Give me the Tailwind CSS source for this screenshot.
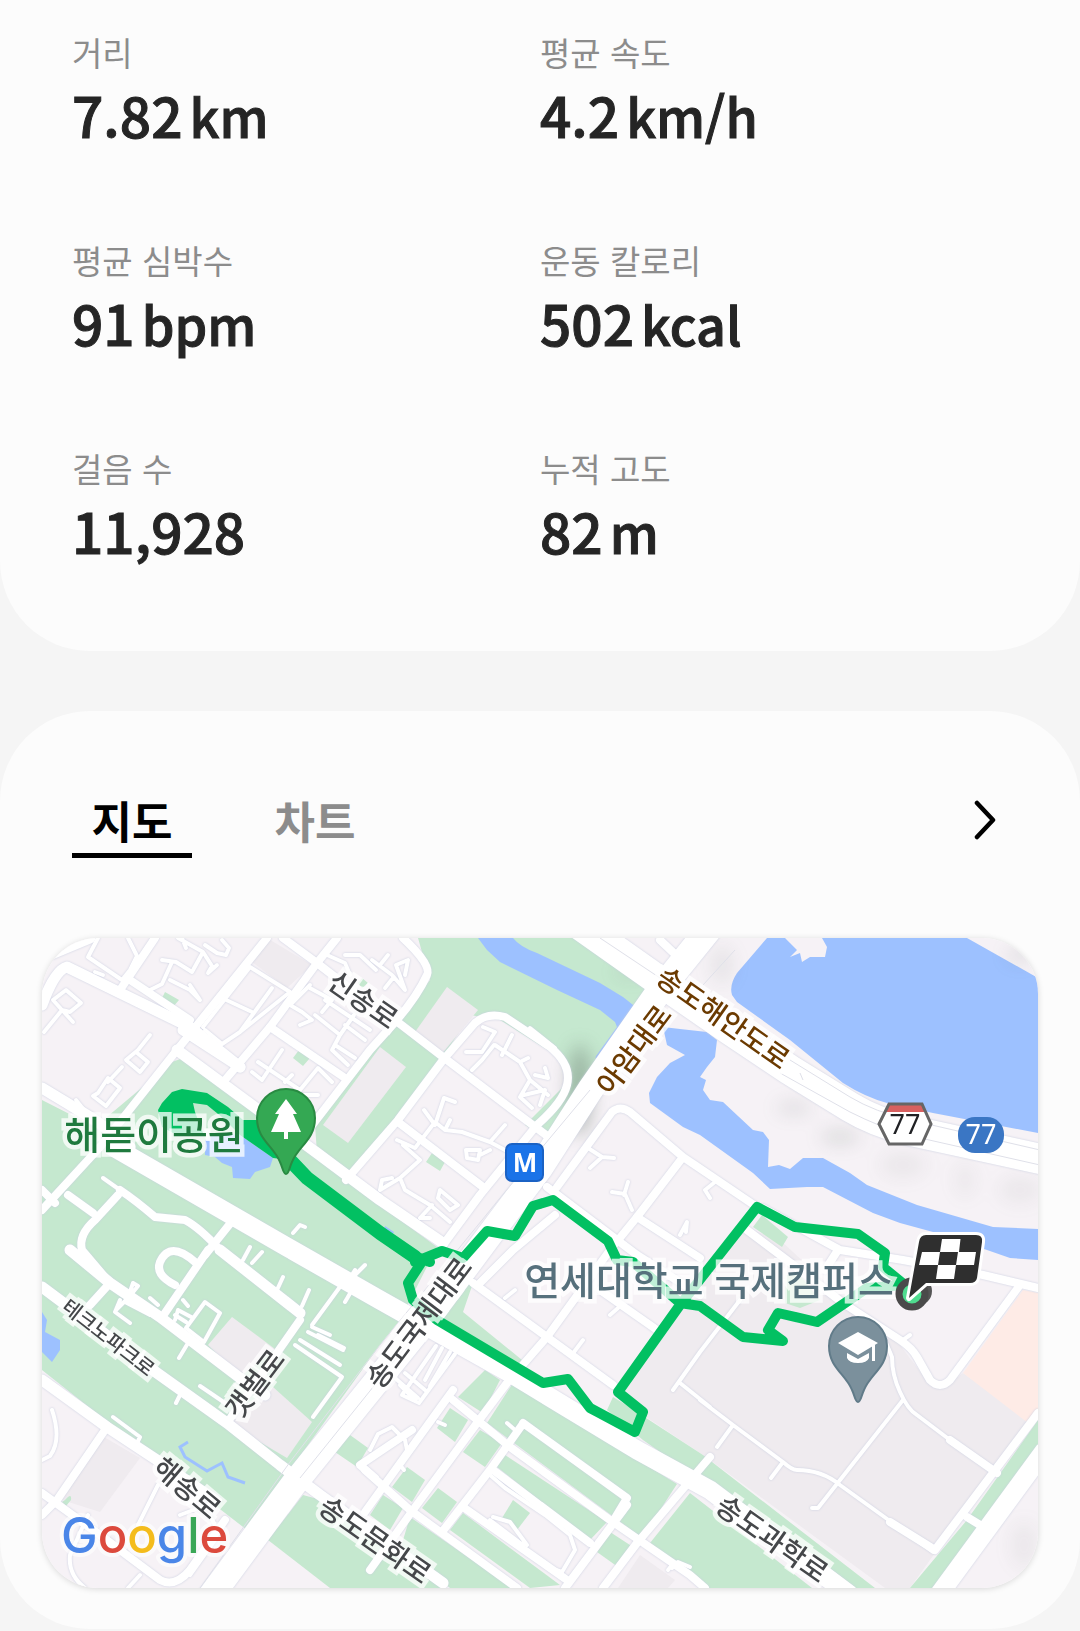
<!DOCTYPE html>
<html lang="ko">
<head>
<meta charset="utf-8">
<meta name="viewport" content="width=device-width, initial-scale=1">
<title>운동 결과</title>
<script src="https://cdn.jsdelivr.net/npm/@tailwindcss/browser@4"></script>
</head>
<body class="bg-[#f5f5f5] pb-0.5 font-['Noto_Sans_CJK_KR',sans-serif] text-[#252525]">
<main class="flex flex-col gap-[60px]">
  <section class="rounded-b-[90px] bg-[#fcfcfc] px-[72px] pt-[30px] pb-[81px]">
    <dl class="grid grid-cols-2 gap-y-[84px]">
      <div><dt class="text-[33px] leading-[44px] text-[#8c8c8c]">거리</dt><dd class="flex h-20 items-baseline gap-[7px] text-[55px] leading-[80px] font-medium [-webkit-text-stroke:1px_#252525]">7.82<span class="text-[52px]">km</span></dd></div>
      <div><dt class="text-[33px] leading-[44px] text-[#8c8c8c]">평균 속도</dt><dd class="flex h-20 items-baseline gap-[7px] text-[55px] leading-[80px] font-medium [-webkit-text-stroke:1px_#252525]">4.2<span class="text-[52px]">km/h</span></dd></div>
      <div><dt class="text-[33px] leading-[44px] text-[#8c8c8c]">평균 심박수</dt><dd class="flex h-20 items-baseline gap-[7px] text-[55px] leading-[80px] font-medium [-webkit-text-stroke:1px_#252525]">91<span class="text-[52px]">bpm</span></dd></div>
      <div><dt class="text-[33px] leading-[44px] text-[#8c8c8c]">운동 칼로리</dt><dd class="flex h-20 items-baseline gap-[7px] text-[55px] leading-[80px] font-medium [-webkit-text-stroke:1px_#252525]">502<span class="text-[52px]">kcal</span></dd></div>
      <div><dt class="text-[33px] leading-[44px] text-[#8c8c8c]">걸음 수</dt><dd class="h-20 text-[55px] leading-[80px] font-medium [-webkit-text-stroke:1px_#252525]">11,928</dd></div>
      <div><dt class="text-[33px] leading-[44px] text-[#8c8c8c]">누적 고도</dt><dd class="flex h-20 items-baseline gap-[7px] text-[55px] leading-[80px] font-medium [-webkit-text-stroke:1px_#252525]">82<span class="text-[52px]">m</span></dd></div>
    </dl>
  </section>

  <section class="rounded-[90px] bg-[#fcfcfc] px-[42px] pt-[79px] pb-[41px]">
    <div class="mb-20 flex items-start justify-between px-[30px]">
      <div class="flex gap-[63px]" role="tablist">
        <button role="tab" aria-selected="true" class="w-[120px] border-b-[5px] border-black pb-[3px] text-[44px] leading-[60px] font-bold text-black">지도</button>
        <button role="tab" aria-selected="false" class="w-[120px] border-b-[5px] border-transparent pb-[3px] text-[44px] leading-[60px] font-bold text-[#8c8c8c]">차트</button>
      </div>
      <button aria-label="자세히" class="flex h-[60px] items-center px-[11px]">
        <svg class="h-10 w-6" viewBox="0 0 24 40" fill="none" stroke="#000" stroke-width="4.500" stroke-linecap="round" stroke-linejoin="round"><path d="M4 3 L20 20 L4 37"/></svg>
      </button>
    </div>

    <div class="overflow-hidden rounded-[56px] shadow-[0_1px_6px_#00000026]">
    <svg class="block w-full" viewBox="42 938 996 650" role="img" aria-label="운동 경로 지도" font-family="'Noto Sans CJK KR', sans-serif">
      <defs>
        <filter id="haze" x="-50%" y="-50%" width="200%" height="200%"><feGaussianBlur stdDeviation="9"/></filter>
      </defs>
      <rect x="42" y="938" width="996" height="650" fill="#f6f2f6"/>

      <!-- built-up blocks -->
      <g fill="#efebef">
        <path d="M267 938 L312 965 L287 988 L252 962Z"/>
        <path d="M680 1310 L613 1395 L703 1455 L885 1588 L910 1588 L1030 1420 L963 1373 L947 1385 L928 1382 L900 1345 L845 1300 L780 1240 L747 1228Z"/>
        <path d="M104 1437 L140 1458 L100 1512 L62 1500Z"/>
        <path d="M640 1555 L675 1580 L668 1588 L618 1588Z"/>
      </g>
      <path d="M1023 1290 L1038 1293 L1038 1410 L1028 1423 L963 1373Z" fill="#feebe6"/>

      <!-- parks and green belts -->
      <g fill="#c5e8cf">
        <path d="M42 1100 L95 1127 L145 1085 L172 1062 L183 1058 L250 1107 L317 1155 L380 1205 L437 1247 L400 1320 L380 1345 L290 1470 L247 1530 L150 1455 L105 1420 L42 1370Z"/>
        <path d="M418 938 L587 938 L656 985 L653 1005 L600 1070 L552 1143 L525 1125 L570 1080 L560 1058 L500 1020 L470 1015 L443 1057 L350 1177 L317 1153 L315 1125 L430 980Z"/>
        <path d="M303 1495 L268 1540 L330 1588 L445 1588 L400 1550 L340 1505Z"/>
        <path d="M350 1435 L368 1448 L357 1467 L335 1452Z"/>
        <path d="M513 1383 L677 1484 L642 1538 L487 1423Z"/>
        <path d="M502 1453 L607 1522 L590 1540 L497 1467Z"/>
        <path d="M485 1370 L500 1380 L483 1413 L458 1397Z"/>
        <path d="M450 1408 L468 1420 L455 1442 L437 1428Z"/>
        <path d="M480 1430 L502 1443 L485 1467 L463 1452Z"/>
        <path d="M407 1467 L425 1480 L412 1502 L392 1487Z"/>
        <path d="M438 1488 L457 1502 L442 1523 L422 1508Z"/>
        <path d="M383 1495 L403 1508 L390 1530 L370 1515Z"/>
        <path d="M410 1517 L513 1588 L450 1588 L400 1550Z"/>
        <path d="M463 1513 L560 1585 L530 1588 L450 1530Z"/>
        <path d="M513 1500 L530 1513 L517 1530 L502 1518Z"/>
        <path d="M610 1532 L633 1547 L618 1567 L597 1552Z"/>
        <path d="M690 1493 L812 1588 L705 1588 L650 1543Z"/>
        <path d="M613 1397 L623 1403 L703 1455 L875 1588 L847 1588 L700 1480 L643 1440 L607 1410Z"/>
        <path d="M473 1283 L463 1312 L522 1360 L515 1372 L437 1322 L453 1290Z"/>
        <path d="M1038 1420 L1038 1453 L933 1588 L910 1588 L967 1520Z"/>
        <path d="M762 1215 L788 1237 L782 1247 L753 1227Z"/>
        <path d="M785 1275 L800 1275 L820 1300 L800 1308 L785 1303Z"/>
        <path d="M165 992 L179 1000 L173 1007 L161 1000Z M299 1050 L310 1058 L303 1066 L293 1058Z M432 1153 L445 1162 L440 1171 L426 1162Z M362 978 L368 983 L362 988 L358 983Z M65 1500 Q72 1492 71 1500 L66 1506 L62 1502Z"/>
      </g>
      <g fill="#efebef">
        <path d="M380 1047 L406 1067 L348 1143 L323 1125Z"/>
        <path d="M447 987 L478 1010 L441 1055 L415 1032Z"/>
        <path d="M232 1317 L275 1349 L240 1377 L208 1345Z"/>
        <path d="M273 1387 L312 1422 L287 1458 L228 1423 L245 1405Z"/>
      </g>

      <!-- water -->
      <g fill="#9dc1ff">
        <path d="M767 938 L737 973 Q729 985 732 995 L737 1002 L790 1040 L843 1083 Q865 1097 887 1103 L933 1113 L1038 1133 V978 L967 938 H822 L827 947 L825 957 L810 957 L802 962 L800 953 L790 957 L797 950 L785 938Z"/>
        <path d="M478 938 L513 938 Q520 947 537 953 L600 983 L623 997 L642 1012 L627 1030 L620 1032 L600 1058 Q594 1060 596 1056 L617 1027 L615 1022 L600 1010 L557 990 L500 962 L487 950Z"/>
        <path d="M663 1027 L680 1029 L707 1032 L717 1040 L715 1057 L707 1067 L700 1077 L706 1080 L703 1090 L710 1100 L723 1102 L753 1130 L763 1132 L769 1140 L768 1167 L779 1165 L790 1169 L803 1158 L823 1158 L850 1173 L867 1185 L917 1205 L993 1227 L1038 1229 V1260 L1010 1258 L987 1250 L933 1232 L900 1223 L873 1213 L823 1187 L807 1187 L770 1189 L753 1173 L700 1135 L683 1127 L650 1103 L649 1093 L657 1077 L670 1063 L685 1055 L667 1045Z"/>
        <path d="M205 1140 L205 1155 L215 1157 L222 1163 L232 1167 L233 1178 L250 1179 L255 1172 L270 1167 L273 1158 L240 1135 L215 1133Z"/>
        <path d="M42 1312 L47 1320 L45 1332 L60 1340 L60 1350 L52 1362 L42 1352Z"/>
        <path d="M385 1226 L394 1232 L392 1236 L384 1231Z"/>
      </g>
      <path d="M188 1442 L180 1447 L185 1457 L207 1471 L222 1463 L228 1477 L245 1483" fill="none" stroke="#9dc1ff" stroke-width="3"/>

      <!-- terrain shading -->
      <g filter="url(#haze)" fill="#6b7a70" opacity=".5">
        <ellipse cx="580" cy="1090" rx="11" ry="46"/>
        <ellipse cx="840" cy="1137" rx="20" ry="7" opacity=".4"/>
        <ellipse cx="794" cy="1108" rx="18" ry="7" opacity=".3"/>
        <ellipse cx="903" cy="1165" rx="24" ry="14" opacity=".15"/>
        <ellipse cx="965" cy="1180" rx="10" ry="18" opacity=".15"/>
        <ellipse cx="1020" cy="1190" rx="22" ry="14" opacity=".15"/>
        <ellipse cx="722" cy="965" rx="12" ry="20" opacity=".2"/>
        <ellipse cx="630" cy="972" rx="16" ry="6" opacity=".3"/>
        <ellipse cx="1020" cy="955" rx="14" ry="8" opacity=".3"/>
        <ellipse cx="1024" cy="1545" rx="14" ry="24" opacity=".15"/>
      </g>

      <g fill="none" stroke="#fff" stroke-linecap="round" stroke-linejoin="round" class="drop-shadow-[0_0_1px_#c9cee0]">
        <!-- lanes and drives -->
        <g stroke-width="4">
          <path d="M98 938 L88 957 L122 980 L130 970 L137 956 L128 938 M95 972 L103 975"/>
          <path d="M162 960 L176 962 L192 972 L203 952 L178 938 M182 938 L186 948 M205 945 L217 953 L226 955 L229 948 L222 940 M203 952 L212 966 L208 973 L217 965"/>
          <path d="M150 990 L162 984 L172 962 M170 980 L190 990 L200 1000 L190 985"/>
          <path d="M44 1032 L62 1010 L53 1000 L66 990 L81 1003 L70 1012 L62 1010 L73 1022"/>
          <path d="M150 1035 L138 1050 L126 1060 L140 1072 L148 1062 L136 1052 M122 1067 L108 1082 M98 1093 L108 1078 L120 1088 L106 1106 L93 1096Z M76 1100 L84 1110"/>
          <path d="M203 1027 L250 967 L290 992 L240 1032 L222 1044 L205 1030 M222 998 L252 1012 M272 988 L240 1032"/>
          <path d="M310 985 L290 1005 L302 1012 L312 1020 L300 1025 M308 987 L332 1000 L322 1012 M325 1000 L370 1030 M315 1015 L340 1035 L354 1015 M340 1035 L332 1050 L348 1065 M335 1045 L355 1058 M345 1025 L365 1040"/>
          <path d="M252 1072 L262 1080 L282 1050 M258 1062 L300 1090 M285 1082 L292 1075 M300 1090 L318 1068 L332 1082 M290 1095 L318 1095"/>
          <path d="M327 955 L345 963 L350 975 M345 955 L360 955 L376 970 M372 960 L392 975 L405 990 L396 965 L408 960 L405 975 M385 988 L393 978 M380 965 L388 955"/>
          <path d="M483 1027 L495 1032 L482 1052 L466 1052 M494 1045 L482 1060 L472 1070 M495 1045 L520 1062 L528 1058 M512 1035 L502 1055 M520 1062 L530 1080 L548 1095 M530 1080 L520 1097 L532 1108 M535 1075 L548 1078 L545 1068 M524 1095 L545 1090 L540 1105"/>
          <path d="M530 1028 L555 1048 M424 1110 L435 1125 L444 1098 L455 1102 M435 1122 L415 1148 L397 1140 M435 1122 L445 1130 L462 1132 L490 1142 L505 1150 M445 1130 L450 1120 M490 1142 L505 1125 M466 1150 L480 1150 L478 1160 L467 1158Z M490 1150 L480 1155"/>
          <path d="M403 1145 L420 1160 L400 1178 L380 1190 L382 1180 L392 1178 M400 1178 L405 1190 L430 1205 L450 1222 M440 1190 L458 1205 L450 1210 L438 1198Z M432 1205 L420 1218 L430 1218"/>
          <path d="M588 1148 L602 1157 L614 1158 M602 1157 L590 1168 M612 1192 L625 1194 L632 1210 M628 1182 L624 1195 M680 1235 L687 1222 L686 1232 M710 1198 L705 1190 L715 1182 M610 1315 L618 1308 M574 1352 L583 1340 M505 1298 L515 1290"/>
          <path d="M436 1346 L402 1395 L419 1403 L455 1354 M442 1348 L425 1380 M450 1352 L430 1386 M405 1373 L425 1390 M400 1385 L415 1400 M395 1378 L418 1398"/>
          <path d="M370 1450 L378 1434 L392 1427 L405 1440 L408 1455 M438 1422 L445 1425 M400 1465 L404 1470"/>
          <path d="M52 1410 Q62 1440 50 1456 L42 1460 M158 1485 L138 1525 M88 1515 L70 1555 Q68 1575 85 1588 M140 1575 L128 1588 M200 1510 Q220 1520 215 1540 L190 1575 M180 1515 L220 1500"/>
          <path d="M113 1417 L140 1437 L137 1443 M116 1310 L128 1298 L133 1283 L138 1286 L125 1302 L150 1315 M120 1300 L115 1312 L130 1323 M150 1298 L158 1305 M175 1320 L178 1310 L193 1318 M183 1300 L188 1306 M175 1315 L186 1322 M205 1302 L220 1313 L204 1342 L186 1328Z M188 1343 L179 1358 M200 1386 L228 1405 M180 1395 L176 1403"/>
          <path d="M252 1263 L262 1252 M243 1260 L250 1247 M277 1290 L283 1277 M302 1306 L309 1290 M355 1270 L350 1278 M345 1302 L352 1290 M365 1265 L352 1278"/>
          <path d="M312 1327 L330 1335 M308 1332 L343 1350 M300 1340 L340 1365 M295 1345 L342 1377 L313 1417 M318 1335 L344 1348 M345 1280 L312 1325"/>
          <path d="M103 1178 L120 1190 M293 1233 L300 1225 L305 1227"/>
          <path d="M700 1400 L733 1425 L783 1462 Q792 1470 797 1470 Q822 1470 840 1485 L933 1552 M903 1400 L818 1508 L812 1508 M882 1333 L892 1357 Q892 1375 900 1392 Q908 1410 917 1415 L950 1440 M700 1352 L740 1300 M733 1425 L717 1447 M783 1462 L771 1478 M673 1390 L700 1352 M680 1383 L710 1407 M903 1340 L910 1335"/>
          <path d="M507 1423 L515 1430 M490 1475 L505 1488 L545 1515 L570 1535 L575 1550 L562 1572 L550 1568 M490 1520 L523 1545 M493 1517 L510 1522 L527 1545"/>
          <path d="M672 1568 L678 1562 L690 1567 M672 1565 L668 1570"/>
        </g>
        <!-- side streets -->
        <g stroke-width="8">
          <path d="M267 938 L177 1050 L100 1147 L42 1210"/>
          <path d="M337 938 L317 963 L270 1027 L225 1080"/>
          <path d="M155 938 L118 993"/>
          <path d="M283 938 L317 963 L362 998"/>
          <path d="M130 980 L190 1020"/>
          <path d="M403 938 Q432 965 427 975 Q418 995 397 1020 L370 1050 L310 1128"/>
          <path d="M395 1020 L443 1057 L530 1123 L550 1138"/>
          <path d="M270 1027 L345 1078"/>
          <path d="M346 1180 L398 1120 L443 1060 L475 1023 Q487 1012 505 1017 L550 1047 Q572 1065 567 1085 Q563 1102 537 1125 L480 1195 L443 1245"/>
          <path d="M398 1122 L483 1187"/>
          <path d="M557 1187 L612 1112 Q620 1105 630 1112 L683 1157 L757 1207 M683 1157 L637 1217 L610 1250 L547 1337 L507 1383 L477 1423 L413 1510 L370 1570"/>
          <path d="M547 1187 L637 1255 L700 1295 M637 1217 L700 1258"/>
          <path d="M473 1283 L547 1337 L613 1385 M600 1290 L657 1330"/>
          <path d="M555 1215 L513 1250 L480 1283"/>
          <path d="M747 1230 L800 1270 L843 1303 L900 1340 Q912 1348 917 1357 L930 1380 Q940 1390 950 1380 L1020 1285"/>
          <path d="M763 1208 L840 1250 L903 1260 L983 1275 L1038 1288 M838 1250 L825 1270"/>
          <path d="M1038 1413 L935 1550 L890 1522 M950 1440 L997 1473 M967 1517 L985 1528"/>
          <path d="M453 1390 L383 1487 L365 1512"/>
          <path d="M453 1400 L510 1447 L610 1520 L690 1575 L705 1588"/>
          <path d="M522 1425 L490 1470 L442 1532 M523 1423 L627 1498 L615 1518 M493 1470 L590 1543"/>
          <path d="M627 1505 L565 1588 M710 1457 L637 1543 L603 1588"/>
          <path d="M365 1470 L410 1510 L517 1588 M463 1507 L567 1580"/>
          <path d="M110 1283 L90 1305 M208 1250 L165 1313 M227 1423 L265 1370 L300 1320 M107 1427 L57 1500 L42 1515"/>
          <path d="M42 1493 L100 1535 L160 1580 Q175 1588 190 1570 L225 1520"/>
          <path d="M120 1190 Q135 1200 155 1217 L185 1220 Q200 1228 220 1250 M118 1195 L95 1220 Q78 1235 82 1250 L110 1283"/>
          <path d="M68 1195 L93 1213 M42 1190 L55 1203 M233 1220 L205 1255"/>
          <path d="M195 1262 Q170 1240 160 1262 Q155 1275 175 1285"/>
          <path d="M412 1430 L360 1465 L375 1478"/>
          <path d="M618 940 L645 960 M660 940 L678 957 L695 938"/>
        </g>
        <!-- district roads -->
        <g stroke-width="11">
          <path d="M42 1005 Q55 970 67 967 L190 1027 L240 1067"/>
          <path d="M240 1067 L183 1030 M177 1050 L317 1153 L380 1200 L443 1243"/>
          <path d="M42 1088 L95 1120 L130 1147"/>
          <path d="M42 1287 L157 1373 L227 1423 L280 1465 L320 1495 L443 1583"/>
          <path d="M42 1380 L107 1427 L157 1460 L215 1500"/>
          <path d="M70 1250 L110 1283 L160 1317 L240 1378 L265 1395"/>
          <path d="M220 1250 L300 1313"/>
          <path d="M42 958 L90 938"/>
        </g>
        <g stroke-width="19" stroke-linecap="butt">
          <path d="M110 1145 L287 1247 L380 1300 L510 1373 L637 1450 L710 1490 L850 1595"/>
          <path d="M1045 1450 L935 1600"/>
        </g>
        <path stroke-width="26" stroke-linecap="butt" d="M710 928 L660 990 L590 1090 L540 1168 L497 1225 L430 1315 L293 1485 L208 1600"/>
        <path stroke-width="30" stroke-linecap="butt" d="M580 925 L665 985 L730 1030 L790 1070 L850 1107 Q875 1122 907 1130 L1045 1160"/>
      </g>
      <g fill="none" stroke="#dfe0e9" stroke-width="1">
        <path d="M790 1060 L850 1097 Q875 1112 910 1120 L1040 1150 M780 1073 L850 1112 Q880 1127 907 1135 L1040 1165 M600 938 L660 978 M800 1073 L803 1080"/>
        <path d="M590 1090 L500 1198 L380 1345 L290 1462 L200 1588 M435 1310 L300 1478 M735 950 L703 985"/>
      </g>

      <!-- recorded route -->
      <g fill="none" stroke="#02c062" stroke-width="10" stroke-linejoin="round" stroke-linecap="round">
        <path d="M158 1110 L162 1103 L172 1092 L182 1089 L207 1093 L228 1107 L243 1120 L258 1120 L290 1160 L273 1158 L240 1135 L223 1118 L207 1105 L193 1103 L195 1112 L203 1133 L173 1133 L162 1127Z" fill="#02c062" stroke="none"/>
        <path d="M250 1128 L287 1157 L307 1178 L380 1233 L415 1257" stroke-width="14"/>
        <path d="M417 1257 L430 1262 M415 1262 L442 1251 L463 1258 L487 1231 L515 1236 L533 1206 L553 1200 L608 1241 L617 1260 L633 1262 L680 1303 L700 1306 L743 1337 L783 1341 L768 1330 L778 1313 L817 1322 L867 1288 L905 1285 L883 1267 L885 1253 L858 1234 L795 1227 L757 1207 L680 1305 L618 1392 L643 1412 L635 1432 L590 1408 L568 1379 L543 1383 L437 1320 L413 1300 L408 1283 L423 1260"/>
      </g>

      <!-- street and place labels -->
      <g text-anchor="middle" font-weight="500" stroke="#fff" stroke-opacity=".75" stroke-width="9" stroke-linejoin="miter" paint-order="stroke">
        <g font-size="28" fill="#45474a">
          <text transform="translate(363 1000) rotate(35)" y="10">신송로</text>
          <text transform="translate(419 1323) rotate(-53)" y="10">송도국제대로</text>
          <text transform="translate(772 1539) rotate(35)" y="10">송도과학로</text>
          <text transform="translate(375 1540) rotate(35)" y="10">송도문화로</text>
          <text transform="translate(187 1488) rotate(40)" y="10">해송로</text>
          <text transform="translate(255 1384) rotate(-53)" y="10">갯벌로</text>
          <text transform="translate(109 1337) rotate(38)" y="8" font-size="20">테크노파크로</text>
        </g>
        <g font-size="28" fill="#6b3a00">
          <text transform="translate(723 1018) rotate(35)" y="10">송도해안도로</text>
          <text transform="translate(634 1050) rotate(-53)" y="10">아암대로</text>
        </g>
        <text x="154" y="1149" font-size="39" fill="#1f7a3e">해돋이공원</text>
        <text x="709" y="1295" font-size="39" fill="#56707c">연세대학교 국제캠퍼스</text>
      </g>

      <!-- park pin -->
      <g>
        <path d="M286 1174 C283 1174 283 1168 280 1162 C274 1146 257 1140 257 1118 A29 29 0 0 1 315 1118 C315 1140 298 1146 292 1162 C289 1168 289 1174 286 1174Z" fill="#34a853" stroke="#298a42" stroke-width="2"/>
        <path d="M286 1099 L297 1114 H293 L301 1132 H288 V1139 H284 V1132 H271 L279 1114 H275Z" fill="#fff"/>
      </g>
      <!-- campus pin -->
      <g>
        <path d="M858 1402 C855 1402 855 1396 852 1390 C846 1374 829 1368 829 1346 A29 29 0 0 1 887 1346 C887 1368 870 1374 864 1390 C861 1396 861 1402 858 1402Z" fill="#7b909c" stroke="#617b89" stroke-width="2"/>
        <path d="M858 1332 L878 1343 L858 1355 L838 1343Z M873 1345 H875 V1361 H872 V1346Z M847 1353 L858 1359 L869 1353 V1358 Q867 1363 858 1363 Q849 1363 847 1358Z" fill="#fff"/>
      </g>
      <!-- metro station -->
      <rect x="506" y="1144" width="37" height="37" rx="6" fill="#1a73e8" stroke="#1b62c4" stroke-width="2"/>
      <text x="525" y="1172" text-anchor="middle" font-family="'Noto Sans', sans-serif" font-weight="700" font-size="26" fill="#fff">M</text>
      <!-- route shields -->
      <path d="M879 1124 L889 1104 H922 L931 1124 L922 1144 H889Z" fill="#fff"/>
      <path d="M889 1104 H922 L925 1112 H885Z" fill="#d86060"/>
      <path d="M879 1124 L889 1104 H922 L931 1124 L922 1144 H889Z" fill="none" stroke="#666" stroke-width="3"/>
      <rect x="958" y="1117" width="46" height="36" rx="17" fill="#3a76c4"/>
      <g text-anchor="middle" font-family="'Noto Sans', sans-serif" font-size="27">
        <text x="905" y="1134" fill="#202124">77</text>
        <text x="981" y="1144" fill="#fff">77</text>
      </g>

      <!-- finish marker -->
      <circle cx="917" cy="1291" r="15" fill="#555"/>
      <circle cx="912" cy="1294" r="13" fill="#4fdc8f" stroke="#4a4a4a" stroke-width="7"/>
      <path d="M926 1235 H976 Q983 1235 982 1242 L977 1278 Q976 1283 970 1283 H926 L909 1298 L919 1242 Q920 1235 926 1235Z" fill="#2f2f2f" stroke="#fff" stroke-width="6" stroke-linejoin="round" paint-order="stroke"/>
      <path d="M942 1239 H960.500 L959 1252 H976 L974 1265 H956 L954 1279 H936 L938 1265 H919 L922 1252 H940Z M940 1252 L938 1265 H956 L958 1252Z" fill="#fff" fill-rule="evenodd"/>

      <text x="61" y="1553" font-family="Inter, sans-serif" font-weight="500" font-size="49" stroke="#fff" stroke-opacity=".6" stroke-width="8" stroke-linejoin="round" paint-order="stroke"><tspan fill="#4a86e8">G</tspan><tspan fill="#dc4a3d">o</tspan><tspan fill="#f4bc1c">o</tspan><tspan fill="#4a86e8">g</tspan><tspan fill="#3aa757">l</tspan><tspan fill="#dc4a3d">e</tspan></text>
    </svg>
    </div>
  </section>
</main>
</body>
</html>
